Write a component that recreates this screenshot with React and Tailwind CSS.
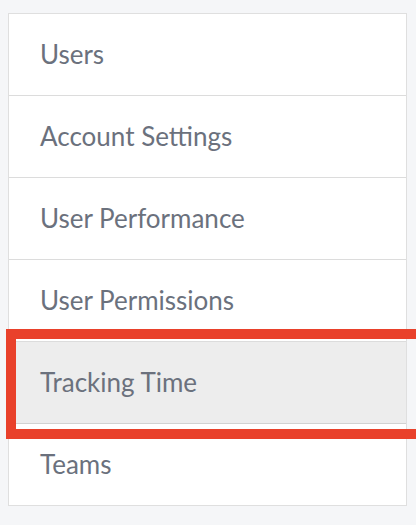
const items = [
  "Users",
  "Account Settings",
  "User Performance",
  "User Permissions",
  "Tracking Time",
  "Teams",
];

export default function App() {
  return (
    <div className="min-h-[525px] w-full overflow-hidden bg-[#f5f6f8] pt-[13px] pl-[8px] pr-[9px]">
      <ul className="border border-[#dfdfdf] bg-white font-['Lato','Noto_Sans',sans-serif]">
        {items.map((label, i) => {
          const active = label === "Tracking Time";
          const last = i === items.length - 1;
          return (
            <li
              key={label}
              className={
                "relative flex items-center pl-[31px] text-[26px] text-[#6b717d] " +
                (last ? "h-[81px] " : "h-[82px] border-b ") +
                (active ? "border-[#d2d2d2] bg-[#ededed]" : "border-[#dcdcdc]")
              }
            >
              {label}
              {active && (
                <div className="pointer-events-none absolute top-[-13px] left-[-3px] right-[-30px] h-[110px] border-[10px] border-[#e9412b]" />
              )}
            </li>
          );
        })}
      </ul>
    </div>
  );
}
